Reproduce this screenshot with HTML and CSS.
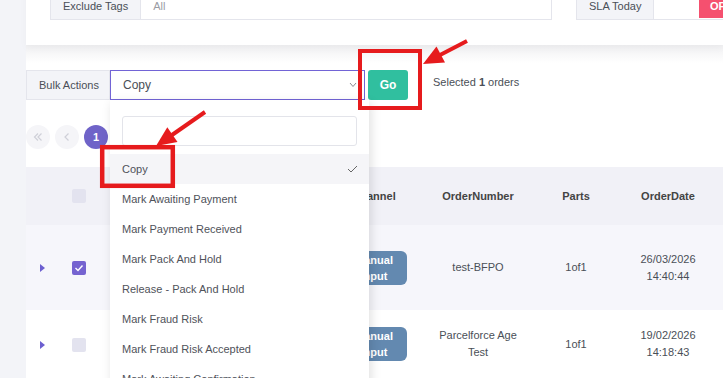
FILE: index.html
```html
<!DOCTYPE html>
<html lang="en">
<head>
    <meta charset="UTF-8">
    <meta name="viewport" content="width=device-width, initial-scale=1.0">
    <title>Orders - Bulk Actions</title>
    <link rel="stylesheet" href="styles.css">
</head>
<body>

    <div class="page">
        <div class="card filters">
            <div class="filter-row">
                <div class="input-group tags">
                    <span class="addon">Exclude Tags</span>
                    <div class="field">All</div>
                </div>
                <div class="input-group sla">
                    <span class="addon">SLA Today</span>
                    <div class="field"><span class="toggle">OFF</span></div>
                </div>
            </div>
        </div>

        <div class="card orders">
            <div class="bulk-row">
                <span class="addon">Bulk Actions</span>
                <div class="select-wrap">
                    <div class="select">
                        <span>Copy</span>
                        <svg width="8" height="6" viewBox="0 0 8 6"><polyline points="1,1 4,4.5 7,1" fill="none" stroke="#8a8a92" stroke-width="1"/></svg>
                    </div>
                    <div class="dropdown">
                        <div class="search"></div>
                        <ul class="options">
                            <li class="active">Copy
                                <svg width="11" height="8" viewBox="0 0 11 8"><polyline points="1,4 4,7 10,1" fill="none" stroke="#666" stroke-width="1"/></svg>
                            </li>
                            <li>Mark Awaiting Payment</li>
                            <li>Mark Payment Received</li>
                            <li>Mark Pack And Hold</li>
                            <li>Release - Pack And Hold</li>
                            <li>Mark Fraud Risk</li>
                            <li>Mark Fraud Risk Accepted</li>
                            <li>Mark Awaiting Confirmation</li>
                        </ul>
                    </div>
                </div>
                <button class="go" type="button">Go</button>
                <span class="selected">Selected <b>1</b> orders</span>
            </div>

            <div class="pager">
                <span class="page-btn disabled">
                    <svg width="10" height="10" viewBox="0 0 10 10"><polyline points="5,1.5 1.5,5 5,8.5" fill="none" stroke="#cfd0d8" stroke-width="1.2"/><polyline points="8.5,1.5 5,5 8.5,8.5" fill="none" stroke="#cfd0d8" stroke-width="1.2"/></svg>
                </span>
                <span class="page-btn disabled">
                    <svg width="10" height="10" viewBox="0 0 10 10"><polyline points="6.5,1.5 3,5 6.5,8.5" fill="none" stroke="#cfd0d8" stroke-width="1.2"/></svg>
                </span>
                <span class="page-btn current">1</span>
            </div>

            <table class="orders-table">
                <colgroup>
                    <col style="width:32px">
                    <col style="width:42px">
                    <col style="width:221px">
                    <col style="width:106px">
                    <col style="width:102px">
                    <col style="width:94px">
                    <col style="width:90px">
                    <col style="width:120px">
                </colgroup>
                <thead>
                    <tr>
                        <th></th>
                        <th><span class="check"></span></th>
                        <th></th>
                        <th>Channel</th>
                        <th>OrderNumber</th>
                        <th>Parts</th>
                        <th>OrderDate</th>
                        <th></th>
                    </tr>
                </thead>
                <tbody>
                    <tr class="selected">
                        <td><span class="caret"></span></td>
                        <td><span class="check checked">
                            <svg width="10" height="8" viewBox="0 0 10 8"><polyline points="1.5,4 4,6.5 8.5,1.5" fill="none" stroke="#fff" stroke-width="1.4"/></svg>
                        </span></td>
                        <td></td>
                        <td><span class="badge">Manual Input</span></td>
                        <td>test-BFPO</td>
                        <td>1of1</td>
                        <td>26/03/2026<br>14:40:44</td>
                        <td></td>
                    </tr>
                    <tr class="short">
                        <td><span class="caret"></span></td>
                        <td><span class="check"></span></td>
                        <td></td>
                        <td><span class="badge">Manual Input</span></td>
                        <td>Parcelforce Age<br>Test</td>
                        <td>1of1</td>
                        <td>19/02/2026<br>14:18:43</td>
                        <td></td>
                    </tr>
                </tbody>
            </table>
        </div>
    </div>

    <!-- red callouts drawn over the screenshot -->
    <svg class="callouts" width="723" height="378" viewBox="0 0 723 378">
        <rect x="360" y="51" width="60" height="57" fill="none" stroke="#e61b1d" stroke-width="4"/>
        <line x1="467" y1="41" x2="440" y2="55" stroke="#e61b1d" stroke-width="4"/>
        <polygon points="423,64 445,62.5 436.5,46.5" fill="#e61b1d"/>
        <rect x="102.2" y="147.2" width="70.6" height="38.6" fill="none" stroke="#e61b1d" stroke-width="4.5"/>
        <line x1="205" y1="112" x2="172" y2="135" stroke="#e61b1d" stroke-width="4"/>
        <polygon points="156,146 177.5,142 167.3,127.2" fill="#e61b1d"/>
    </svg>

</body>
</html>
```

FILE: styles.css
```css
* { box-sizing: border-box; }
html, body { height: 100%; overflow: hidden; }
body { margin: 0; background: #f3f4f8; font-family: "Liberation Sans", Arial, sans-serif; font-size: 11px; color: #4a4f57; }
.page { padding-left: 26px; }
.card { background: #fff; }

/* filter card (scrolled, top cut off) */
.filters { margin-top: -9px; padding: 0 0 25px 24px; position: relative; z-index: 1; box-shadow: 0 3px 8px rgba(0,0,0,0.03); }
.filter-row { display: flex; gap: 24px; }
.input-group { display: flex; flex-shrink: 0; height: 29px; }
.addon { display: flex; align-items: center; padding: 0 12px; background: #f3f4f8; border: 1px solid #e4e5ec; color: #4a4f57; white-space: nowrap; }
.field { flex: 1; display: flex; align-items: center; padding: 0 12px; background: #fff; border: 1px solid #e4e5ec; border-left: none; color: #9a9ca4; }
.tags { width: 502px; }
.sla { width: 170px; }
.sla .field { padding: 0 2px 0 0; justify-content: flex-end; }
.toggle { height: 24px; padding: 0 11px; display: flex; align-items: center; background: #f5506f; color: #fff; font-weight: bold; }

/* orders card */
.orders { padding-top: 25px; min-height: 400px; background: linear-gradient(#f0f0f2, #fff 18px); }
.bulk-row { display: flex; align-items: center; height: 30px; }
.bulk-row .addon { height: 30px; width: 84px; }
.select-wrap { position: relative; z-index: 5; }
.select { width: 255px; height: 30px; padding: 0 7px 0 12px; display: flex; align-items: center; justify-content: space-between; border: 1px solid #7264d6; background: #fff; font-size: 12px; color: #4a4f57; }
.dropdown { position: absolute; left: 0; top: 30px; width: 259px; padding-top: 16px; background: #fff; box-shadow: 2px 3px 10px rgba(0,0,0,0.13); }
.search { margin: 0 12px 8px; height: 30px; border: 1px solid #e3e4ea; border-radius: 3px; }
.options { list-style: none; margin: 0; padding: 0; }
.options li { height: 30px; padding: 0 11px 0 12px; display: flex; align-items: center; justify-content: space-between; color: #4f525a; }
.options li.active { background: #f5f5f8; }
.go { margin-left: 3px; width: 40px; height: 30px; border: none; border-radius: 3px; background: #30bf9f; color: #fff; font-family: inherit; font-size: 12px; font-weight: bold; cursor: pointer; }
.selected { margin-left: 25px; padding-bottom: 6px; color: #4a4f57; }

.pager { margin-top: 25px; display: flex; gap: 5px; }
.page-btn { width: 24px; height: 24px; border-radius: 50%; display: flex; align-items: center; justify-content: center; }
.page-btn.disabled { background: #f5f5f8; }
.page-btn.current { background: #6f63c8; color: #fff; font-weight: bold; }

.orders-table { margin-top: 18px; border-collapse: collapse; table-layout: fixed; width: 807px; }
.orders-table th { height: 58px; padding: 0; background: #f1f1f7; color: #444; font-weight: bold; text-align: center; }
.orders-table td { height: 85px; padding: 0; text-align: center; line-height: 17px; color: #4a4f57; }
.orders-table tr.short td { height: 68px; }
.orders-table tr.selected td { background: #f6f6fb; }
.check { display: inline-flex; align-items: center; justify-content: center; width: 14px; height: 14px; border-radius: 2px; background: #e3e3ef; vertical-align: middle; }
.check.checked { background: #7563d0; }
.caret { display: inline-block; width: 0; height: 0; border-top: 4px solid transparent; border-bottom: 4px solid transparent; border-left: 5px solid #6c5fd0; vertical-align: middle; }
.badge { display: inline-block; width: 66px; padding: 1px 6px; border-radius: 6px; background: #6389b0; color: #fff; font-weight: bold; line-height: 16px; vertical-align: middle; }

.callouts { position: absolute; left: 0; top: 0; pointer-events: none; z-index: 10; }
```
